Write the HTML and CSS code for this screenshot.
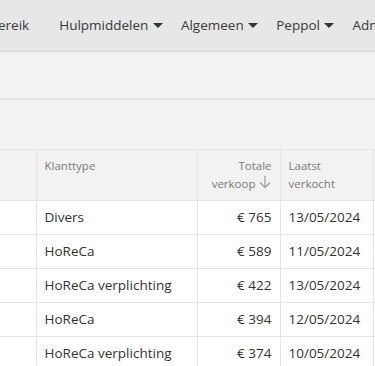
FILE: index.html
```html
<!DOCTYPE html>
<html lang="nl">
<head>
    <meta charset="UTF-8">
    <meta name="viewport" content="width=device-width, initial-scale=1.0">
    <title>Verkoop</title>
    <link rel="stylesheet" href="styles.css">
</head>
<body>
    <nav class="topnav">
        <ul class="menu">
            <li class="menu_item first">Verkoopbereik</li>
            <li class="menu_item">Hulpmiddelen <span class="caret"></span></li>
            <li class="menu_item">Algemeen <span class="caret"></span></li>
            <li class="menu_item">Peppol <span class="caret"></span></li>
            <li class="menu_item">Admin <span class="caret"></span></li>
        </ul>
    </nav>
    <div class="band"></div>
    <div class="band band_tall"></div>
    <div class="table_wrap">
        <table class="grid">
            <thead>
                <tr class="head_row">
                    <th class="col_name"></th>
                    <th class="col_type">Klanttype</th>
                    <th class="col_total num">Totale <span class="nobr">verkoop<svg class="sort_icon" width="14" height="14" viewBox="0 0 14 14"><path d="M7 1v11.5M2 7.5l5 5 5-5" fill="none" stroke="#9a9a9a" stroke-width="1.2"/></svg></span></th>
                    <th class="col_date">Laatst verkocht</th>
                    <th class="col_more"></th>
                </tr>
            </thead>
            <tbody>
                <tr><td></td><td>Divers</td><td class="num">€ 765</td><td>13/05/2024</td><td></td></tr>
                <tr><td></td><td>HoReCa</td><td class="num">€ 589</td><td>11/05/2024</td><td></td></tr>
                <tr><td></td><td>HoReCa verplichting</td><td class="num">€ 422</td><td>13/05/2024</td><td></td></tr>
                <tr><td></td><td>HoReCa</td><td class="num">€ 394</td><td>12/05/2024</td><td></td></tr>
                <tr><td></td><td>HoReCa verplichting</td><td class="num">€ 374</td><td>10/05/2024</td><td></td></tr>
            </tbody>
        </table>
    </div>
</body>
</html>
```

FILE: styles.css
```css
html, body {
    margin: 0;
    padding: 0;
}

body {
    width: 375px;
    height: 366px;
    overflow: hidden;
    background-color: #fff;
    font-family: "Open Sans", "Noto Sans", sans-serif;
    color: #333;
}

.topnav {
    height: 51px;
    background-color: #e7e7e7;
    border-bottom: 1px solid #d6d6d6;
    overflow: hidden;
}

.menu {
    display: flex;
    align-items: center;
    height: 100%;
    margin: 0 0 0 -72px;
    padding: 0 0 2px;
    list-style: none;
    white-space: nowrap;
    box-sizing: border-box;
}

.menu_item {
    font-size: 13.5px;
    color: #3a3a3a;
    padding: 0 9px;
}

.menu_item.first {
    padding-right: 21px;
}

.caret {
    display: inline-block;
    width: 0;
    height: 0;
    margin-left: 1px;
    vertical-align: middle;
    border-top: 5px solid #333;
    border-left: 5px solid transparent;
    border-right: 5px solid transparent;
}

.band {
    height: 46px;
    background-color: #f2f2f2;
    border-bottom: 2px solid #e2e2e2;
}

.band_tall {
    height: 49px;
    border-bottom: 1px solid #e4e4e4;
}

.table_wrap {
    overflow: hidden;
}

.grid {
    border-collapse: collapse;
    table-layout: fixed;
    width: 520px;
    margin-left: -120px;
    font-size: 13.5px;
}

.head_row {
    height: 50px;
}

.grid th {
    padding: 7px 8px 0;
    vertical-align: top;
    text-align: left;
    font-weight: normal;
    font-size: 11.5px;
    line-height: 18px;
    color: #7a7a7a;
    background-color: #f2f2f2;
    border-right: 1px solid #e4e4e4;
    border-bottom: 1px solid #e4e4e4;
    box-sizing: border-box;
}

.grid td {
    height: 34px;
    padding: 0 8px;
    border-right: 1px solid #e4e4e4;
    border-bottom: 1px solid #e4e4e4;
    box-sizing: border-box;
    white-space: nowrap;
}

.grid .num {
    text-align: right;
}

.col_name { width: 156px; }
.col_type { width: 161px; }
.col_total { width: 83px; }
.col_date { width: 93px; }
.col_more { width: 27px; }

.nobr {
    white-space: nowrap;
}

.sort_icon {
    margin-left: 2px;
    vertical-align: -1px;
}
```
